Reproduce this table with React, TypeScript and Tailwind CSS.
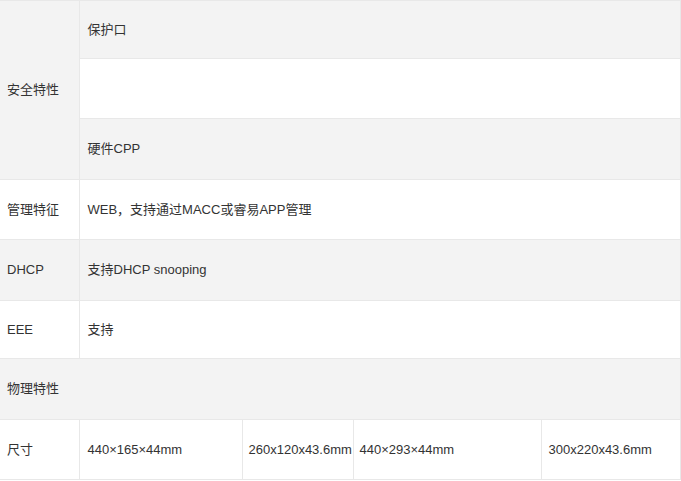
const cell = "border-b border-r border-[#e8e8e8] align-middle text-left font-normal";

export default function App() {
  return (
    <div className="w-[681px] h-[481px] bg-white overflow-hidden">
      <table
        className="table-fixed border-collapse w-[680px] text-[13px] text-[#333333]"
        style={{ fontFamily: '"Liberation Sans", Arial, "Noto Sans CJK SC", sans-serif' }}
      >
        <colgroup>
          <col className="w-[79px]" />
          <col className="w-[163px]" />
          <col className="w-[111px]" />
          <col className="w-[188px]" />
          <col className="w-[139px]" />
        </colgroup>
        <tbody>
          <tr className="h-[58px] border-t border-[#e8e8e8]">
            <td rowSpan={3} className={`${cell} bg-[#f3f3f3] pl-[7px]`}>安全特性</td>
            <td colSpan={4} className={`${cell} bg-[#f3f3f3] pl-[8px]`}>保护口</td>
          </tr>
          <tr className="h-[60px]">
            <td colSpan={4} className={`${cell} bg-white`}></td>
          </tr>
          <tr className="h-[61px]">
            <td colSpan={4} className={`${cell} bg-[#f3f3f3] pl-[8px]`}>硬件CPP</td>
          </tr>
          <tr className="h-[60px]">
            <td className={`${cell} bg-white pl-[7px]`}>管理特征</td>
            <td colSpan={4} className={`${cell} bg-white pl-[8px]`}>WEB，支持通过MACC或睿易APP管理</td>
          </tr>
          <tr className="h-[61px]">
            <td className={`${cell} bg-[#f3f3f3] pl-[7px]`}>DHCP</td>
            <td colSpan={4} className={`${cell} bg-[#f3f3f3] pl-[8px]`}>支持DHCP snooping</td>
          </tr>
          <tr className="h-[58px]">
            <td className={`${cell} bg-white pl-[7px]`}>EEE</td>
            <td colSpan={4} className={`${cell} bg-white pl-[8px]`}>支持</td>
          </tr>
          <tr className="h-[61px]">
            <td colSpan={5} className={`${cell} bg-[#f3f3f3] pl-[7px]`}>物理特性</td>
          </tr>
          <tr className="h-[60px]">
            <td className={`${cell} bg-white pl-[7px]`}>尺寸</td>
            <td className={`${cell} bg-white pl-[8px]`}>440×165×44mm</td>
            <td className={`${cell} bg-white pl-[6px] whitespace-nowrap`}>260x120x43.6mm</td>
            <td className={`${cell} bg-white pl-[6px]`}>440×293×44mm</td>
            <td className={`${cell} bg-white pl-[7px]`}>300x220x43.6mm</td>
          </tr>
        </tbody>
      </table>
    </div>
  );
}
